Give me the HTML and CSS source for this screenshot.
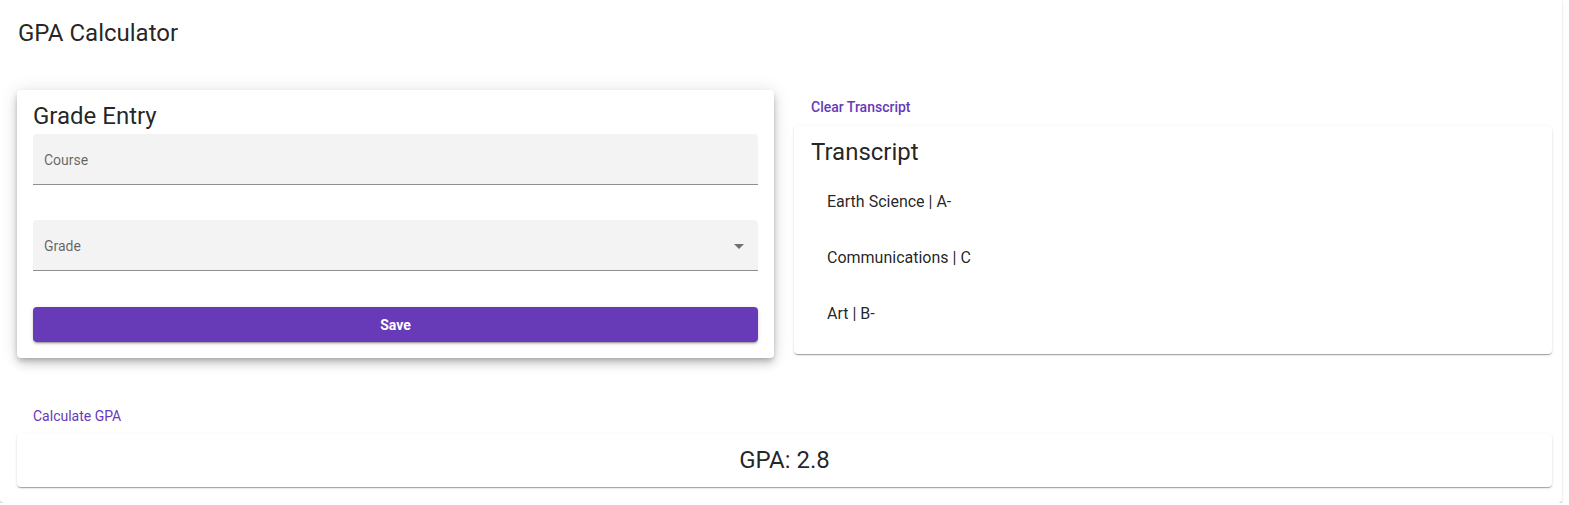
FILE: index.html
```html
<!DOCTYPE html>
<html>
<head>
<meta charset="utf-8">
<link rel="stylesheet" href="styles.css">
</head>
<body>
<div class="page">
  <div class="title">GPA Calculator</div>
  <div class="grid">
    <div class="card entry">
      <div class="card-title">Grade Entry</div>
      <div class="field"><span class="label">Course</span></div>
      <div class="field select"><span class="label">Grade</span>
        <svg class="arrow" viewBox="0 0 24 24" width="24" height="24"><path d="M7 10l5 5 5-5z"/></svg>
      </div>
      <div class="save">Save</div>
    </div>
    <div class="right">
      <div class="text-btn">Clear Transcript</div>
      <div class="card transcript">
        <div class="card-title">Transcript</div>
        <ul class="list">
          <li>Earth Science | A-</li>
          <li>Communications | C</li>
          <li>Art | B-</li>
        </ul>
      </div>
    </div>
  </div>
  <div class="calc-row"><span class="text-btn">Calculate GPA</span></div>
  <div class="card gpa">GPA: 2.8</div>
</div>
</body>
</html>
```
FILE: styles.css
```css
html, body { margin: 0; padding: 0; background: #fff; }
body { font-family: Roboto, "Noto Sans", sans-serif; color: rgba(0,0,0,0.87); }
.page {
  width: 1562px;
  height: 503px;
  box-sizing: border-box;
  border-radius: 0 0 4px 4px;
  box-shadow: 0 2px 1px -1px rgba(0,0,0,0.2), 0 1px 1px 0 rgba(0,0,0,0.14), 0 1px 3px 0 rgba(0,0,0,0.12);
  padding: 0 10px 16px 17px;
  display: flex;
  flex-direction: column;
}
.title {
  font-size: 24px;
  font-weight: 400;
  line-height: 32px;
  padding: 17px 0 0 1px;
}
.grid {
  margin-top: 41px;
  display: grid;
  grid-template-columns: 757px 758px;
  column-gap: 20px;
  align-items: start;
}
.card {
  background: #fff;
  border-radius: 4px;
  box-shadow: 0 2px 1px -1px rgba(0,0,0,0.2), 0 1px 1px 0 rgba(0,0,0,0.14), 0 1px 3px 0 rgba(0,0,0,0.12);
}
.entry {
  padding: 8px 16px 16px;
  box-shadow: 0 3px 5px -1px rgba(0,0,0,0.2), 0 6px 10px 0 rgba(0,0,0,0.14), 0 1px 18px 0 rgba(0,0,0,0.12);
  display: flex;
  flex-direction: column;
}
.card-title {
  font-size: 24px;
  line-height: 36px;
  font-weight: 400;
}
.field {
  height: 50px;
  background: #f3f3f3;
  border-radius: 4px 4px 0 0;
  border-bottom: 1px solid #8f8f8f;
  display: flex;
  align-items: center;
  padding: 0 12px 0 11px;
  position: relative;
}
.field + .field { margin-top: 35px; }
.label {
  font-size: 14px;
  color: rgba(0,0,0,0.6);
  padding-top: 1px;
}
.select { justify-content: space-between; }
.arrow { fill: rgba(0,0,0,0.54); margin-right: -5px; margin-top: 1px; }
.save {
  margin-top: 36px;
  height: 35px;
  background: #673ab7;
  color: #fff;
  border-radius: 4px;
  font-size: 14px;
  font-weight: 700;
  display: flex;
  align-items: center;
  justify-content: center;
  box-shadow: 0 3px 1px -2px rgba(0,0,0,0.2), 0 2px 2px 0 rgba(0,0,0,0.14), 0 1px 5px 0 rgba(0,0,0,0.12);
}
.right { display: flex; flex-direction: column; }
.text-btn {
  color: #673ab7;
  font-size: 14px;
  font-weight: 400;
  line-height: 32px;
  padding-left: 17px;
}
.right .text-btn { margin-top: 1px; margin-bottom: 3px; font-weight: 500; }
.transcript { padding: 8px 17px 12px; }
.list { list-style: none; margin: 4px 0 0; padding: 0; }
.list li {
  height: 56px;
  line-height: 56px;
  padding-left: 16px;
  font-size: 16px;
  color: rgba(0,0,0,0.87);
}
.calc-row { margin-top: 42px; height: 34px; }
.calc-row .text-btn { padding-left: 16px; }
.gpa {
  height: 53px;
  line-height: 53px;
  text-align: center;
  font-size: 24px;
}
```
